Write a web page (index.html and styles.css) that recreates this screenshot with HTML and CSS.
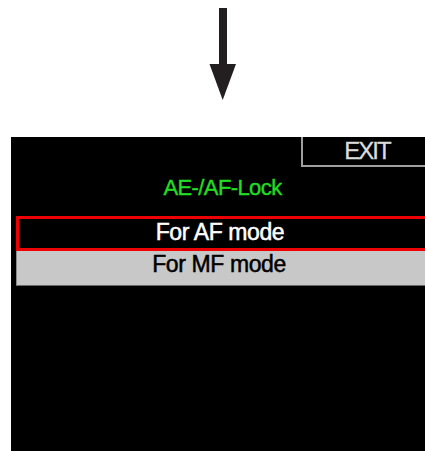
FILE: index.html
```html
<!DOCTYPE html>
<html>
<head>
<meta charset="utf-8">
<link rel="stylesheet" href="styles.css">
</head>
<body>
<div class="arrow-area">
  <svg class="arrow" width="425" height="137" viewBox="0 0 425 137">
    <rect x="219" y="8" width="8" height="57" fill="#231f20"/>
    <polygon points="209.5,64 236,64 222.7,100" fill="#231f20"/>
  </svg>
</div>
<div class="screen">
  <div class="header">
    <div class="exit">EXIT</div>
  </div>
  <div class="title">AE-/AF-Lock</div>
  <div class="menu">
    <div class="item selected">For AF mode</div>
    <div class="item normal">For MF mode</div>
  </div>
</div>
</body>
</html>
```

FILE: styles.css
```css
html, body {
  margin: 0;
  padding: 0;
  background: #ffffff;
  width: 425px;
  height: 451px;
  overflow: hidden;
}
.arrow-area {
  height: 137px;
}
.arrow {
  display: block;
}
.screen {
  margin-left: 11px;
  height: 314px;
  background: #000000;
  font-family: "Liberation Sans", Arial, sans-serif;
  overflow: hidden;
}
.header {
  display: flex;
  justify-content: flex-end;
  height: 30px;
}
.exit {
  box-sizing: border-box;
  width: 124px;
  height: 30px;
  border-left: 2px solid #a0a0a0;
  border-bottom: 2px solid #a0a0a0;
  color: #dcdcdc;
  font-size: 24px;
  letter-spacing: -2px;
  line-height: 28px;
  text-align: center;
  padding-left: 6px;
  -webkit-text-stroke: 0.3px #dcdcdc;
}
.title {
  margin-top: 6px;
  height: 30px;
  line-height: 30px;
  text-align: center;
  color: #22dd22;
  font-size: 22px;
  letter-spacing: -0.6px;
  padding-left: 9px;
  -webkit-text-stroke: 0.4px #22dd22;
}
.menu {
  margin-top: 13px;
  margin-left: 5px;
}
.item {
  box-sizing: border-box;
  text-align: center;
  font-size: 23px;
  letter-spacing: -0.4px;
  padding-right: 4px;
}
.selected {
  height: 35px;
  line-height: 26px;
  border: 3px solid #ee0000;
  border-right: none;
  color: #ffffff;
  -webkit-text-stroke: 0.5px #ffffff;
}
.normal {
  height: 35px;
  line-height: 27px;
  background: #c8c8c8;
  border-left: 1px solid #8a8a8a;
  border-bottom: 1px solid #666666;
  color: #000000;
  -webkit-text-stroke: 0.5px #000000;
}
```
